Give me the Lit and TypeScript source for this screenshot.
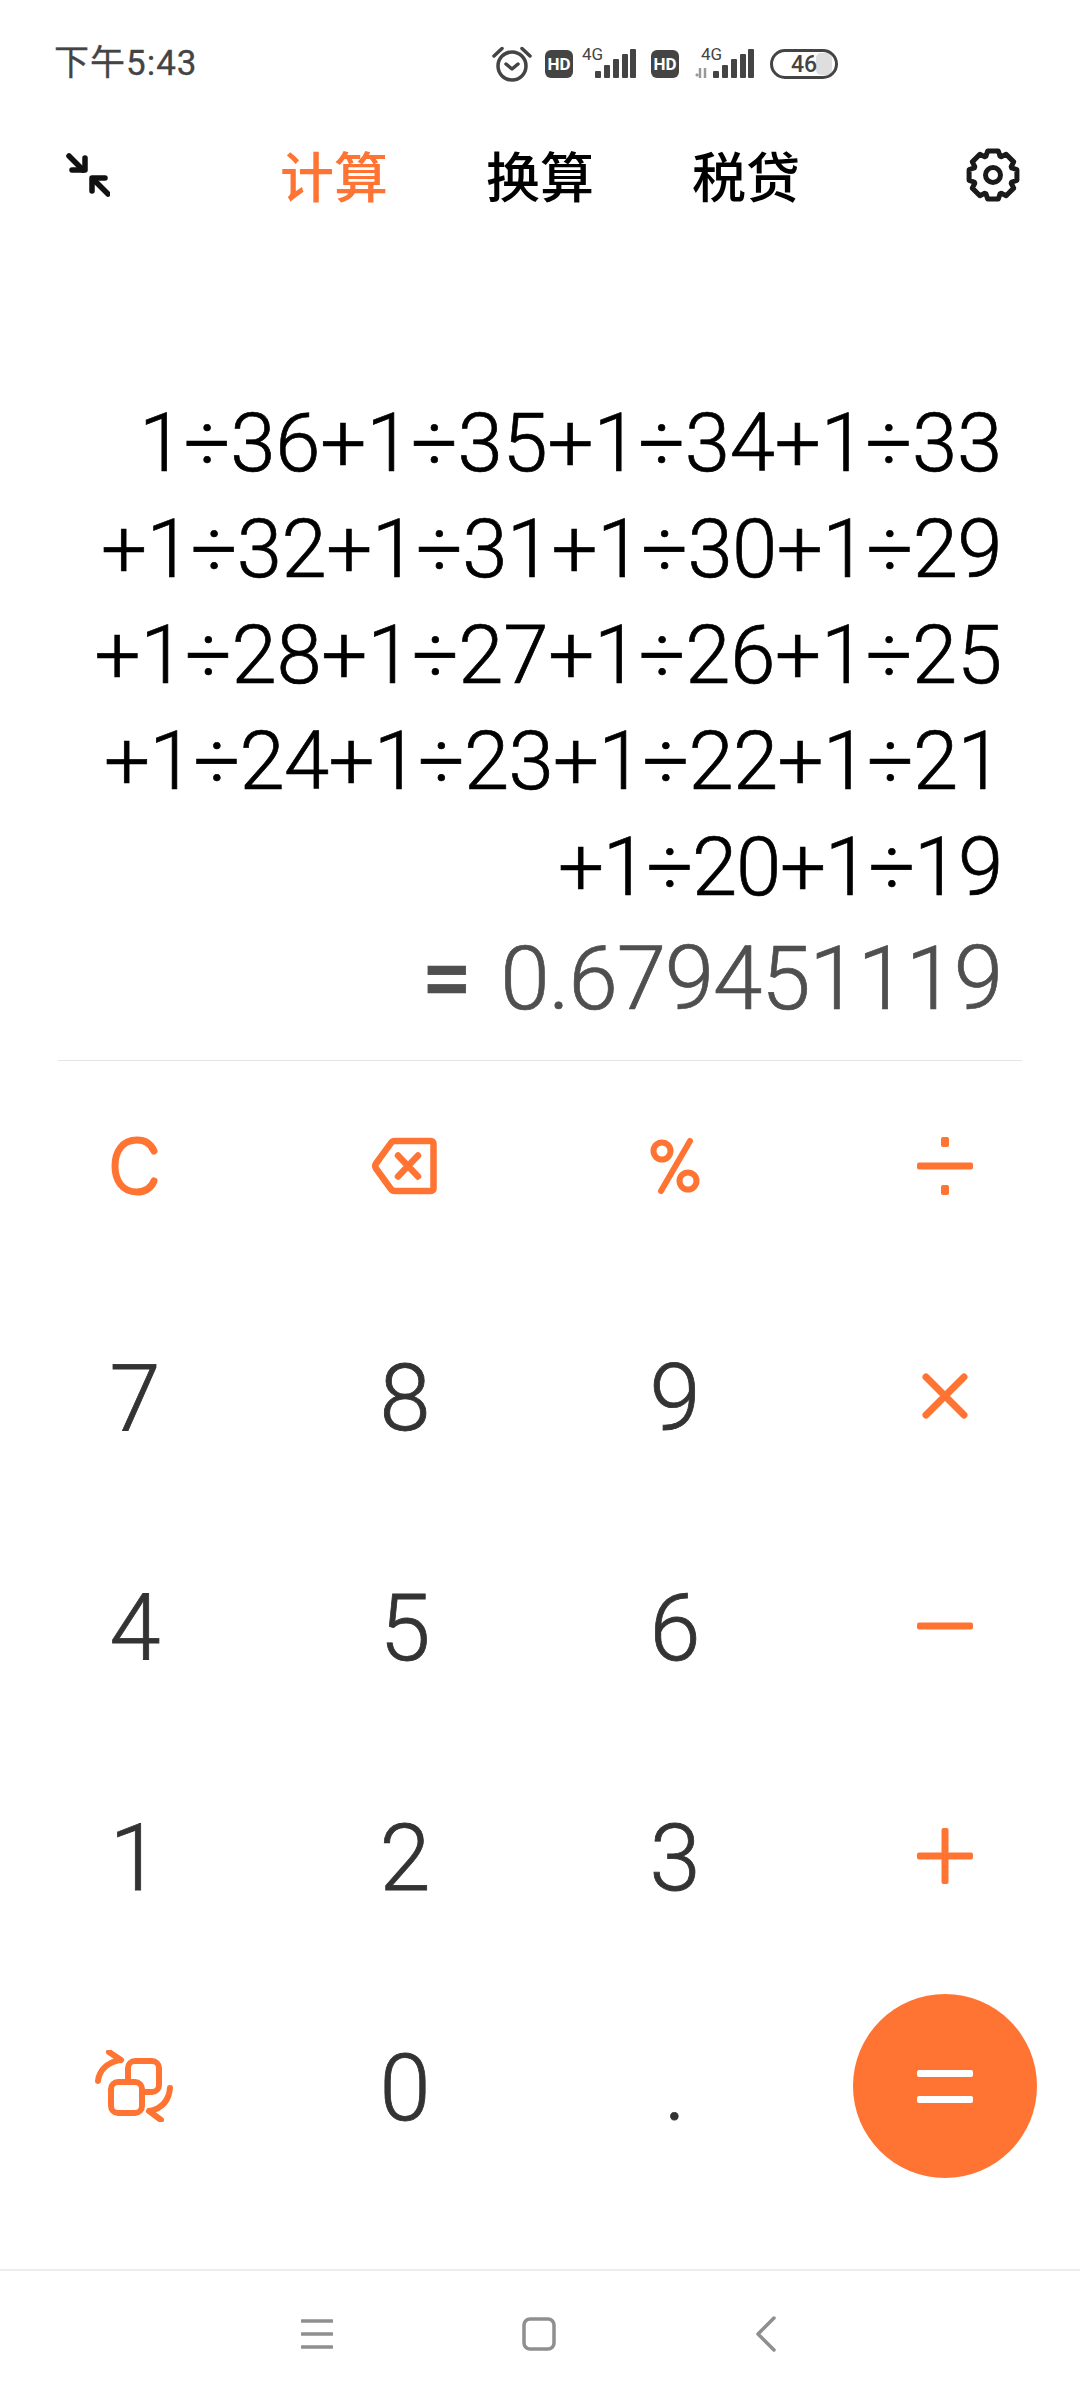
import { LitElement, html, css, svg } from "lit";
import { customElement } from "lit/decorators.js";

const EXPR: { text: string; track: number }[] = [
  { text: "1÷36+1÷35+1÷34+1÷33", track: -0.16 },
  { text: "+1÷32+1÷31+1÷30+1÷29", track: -0.55 },
  { text: "+1÷28+1÷27+1÷26+1÷25", track: -0.23 },
  { text: "+1÷24+1÷23+1÷22+1÷21", track: -0.7 },
  { text: "+1÷20+1÷19", track: -1.2 },
];

function gearPath(): string {
  const cx = 30, cy = 30, ro = 24.5, ri = 20;
  const pts: string[] = [];
  for (let i = 0; i < 8; i++) {
    const a = (i * Math.PI) / 4 - Math.PI / 2;
    const d = 0.22, e = 0.36;
    const p = (r: number, t: number) =>
      `${(cx + r * Math.cos(t)).toFixed(2)} ${(cy + r * Math.sin(t)).toFixed(2)}`;
    pts.push(p(ri, a - e), p(ro, a - d), p(ro, a + d), p(ri, a + e));
  }
  return "M" + pts.join("L") + "Z";
}

const bars = (xs: number[]) => {
  const hs = [7, 13, 19, 24, 29];
  return xs.map((x, i) => svg`<rect x=${x} y=${33 - hs[i]} width="6" height=${hs[i]} rx="1" fill="#444"/>`);
};

const ORANGE = "#ff7433";

const icons = {
  c: svg`<svg class="ico" width="60" height="60" viewBox="0 0 60 60"><path d="M49 15C46 8 40 4 32 4 17 4 10 16 10 30s7 26 22 26c8 0 14-4 17-11" fill="none" stroke=${ORANGE} stroke-width="7" stroke-linecap="round"/></svg>`,
  back: svg`<svg class="ico" width="68" height="58" viewBox="0 0 68 58"><path d="M60 4H24c-2 0-3.500.8-4.500 2.600L5 26.500c-1 1.500-1 3.500 0 5l14.500 20c1 1.800 2.500 2.500 4.500 2.500h36c1.500 0 2.500-1 2.500-2.500V6.500C62.500 5 61.500 4 60 4z" fill="none" stroke=${ORANGE} stroke-width="6.500" stroke-linejoin="round"/><path d="M27 18.500l20 21M47 18.500l-20 21" fill="none" stroke=${ORANGE} stroke-width="6.500" stroke-linecap="round"/></svg>`,
  pct: svg`<svg class="ico" width="50" height="58" viewBox="0 0 50 58"><circle cx="12" cy="14" r="8.500" fill="none" stroke=${ORANGE} stroke-width="6"/><circle cx="38" cy="44" r="8.500" fill="none" stroke=${ORANGE} stroke-width="6"/><path d="M40 4L11 54" fill="none" stroke=${ORANGE} stroke-width="6" stroke-linecap="round"/></svg>`,
  div: svg`<svg class="ico" width="56" height="58" viewBox="0 0 56 58"><rect y="25.500" width="56" height="7" rx="2" fill=${ORANGE}/><rect x="24" y="0" width="8" height="10" rx="2" fill=${ORANGE}/><rect x="24" y="48" width="8" height="10" rx="2" fill=${ORANGE}/></svg>`,
  mul: svg`<svg class="ico" width="48" height="48" viewBox="0 0 48 48"><path d="M5 5l38 38M43 5L5 43" fill="none" stroke=${ORANGE} stroke-width="7" stroke-linecap="round"/></svg>`,
  sub: svg`<svg class="ico" width="56" height="8" viewBox="0 0 56 8"><rect y="0.500" width="56" height="7" rx="2" fill=${ORANGE}/></svg>`,
  add: svg`<svg class="ico" width="56" height="56" viewBox="0 0 56 56"><rect y="24.500" width="56" height="7" rx="2" fill=${ORANGE}/><rect x="24.500" width="7" height="56" rx="2" fill=${ORANGE}/></svg>`,
  swap: svg`<svg class="ico" width="80" height="72" viewBox="0 0 80 72"><g fill="none" stroke=${ORANGE} stroke-width="6" stroke-linecap="round" stroke-linejoin="round"><rect x="33" y="11" width="31" height="31" rx="7"/><rect x="16" y="32" width="31" height="31" rx="7" fill="#fff"/><path d="M3 31C4 22 10 13 25 10M14 2l12 8"/><path d="M75 38C74 49 68 58 55 61M66 70l-12-9"/></g></svg>`,
};

@customElement("app-root")
export class AppRoot extends LitElement {
  static styles = css`
    :host {
      display: flex;
      flex-direction: column;
      width: 1080px;
      height: 2400px;
      background: #fff;
      overflow: hidden;
      font-family: Roboto, "Noto Sans CJK SC", sans-serif;
    }
    .status {
      height: 125px;
      flex: none;
      display: flex;
      align-items: flex-start;
      padding-top: 41px;
      box-sizing: border-box;
      color: #444;
    }
    .time {
      width: 491px;
      padding-left: 54px;
      box-sizing: border-box;
      font-size: 35px;
      line-height: 46px;
      letter-spacing: 1px;
      -webkit-text-stroke: 0.3px #444;
    }
    .sys {
      display: flex;
      align-items: flex-start;
      margin-top: 4px;
    }
    .sys svg { display: block; }
    .sys text { font-family: Roboto, sans-serif; fill: #444; }
    .alarm { margin: 0 13px 0 1px; }
    .sig2 { margin-right: 1px; }
    .batt { margin-top: 4px; }
    .hd {
      width: 28px;
      height: 28px;
      border-radius: 6px;
      background: #444;
      color: #fff;
      font-size: 17px;
      font-weight: 700;
      line-height: 28px;
      text-align: center;
      margin-top: 5px;
    }
    .header {
      height: 100px;
      flex: none;
      display: grid;
      grid-template-columns: 1fr auto 1fr;
      align-items: center;
    }
    .collapse { margin-left: 66px; display: block; }
    .gear { justify-self: end; margin-right: 57px; display: block; }
    .tabs {
      display: flex;
      gap: 98px;
      font-family: "Noto Sans CJK SC", sans-serif;
      font-size: 54px;
      line-height: 70px;
      font-weight: 500;
      color: #000;
    }
    .tab.on { color: #ff7433; }
    .display {
      flex: 1;
      display: flex;
      flex-direction: column;
      justify-content: flex-end;
      align-items: flex-end;
      padding: 0 78px 0 0;
      font-weight: 300;
    }
    .line {
      font-size: 81.5px;
      line-height: 106px;
      color: #000;
      white-space: nowrap;
      -webkit-text-stroke: 0.7px #000;
    }
    .result {
      font-size: 89px;
      line-height: 118px;
      letter-spacing: -1.2px;
      color: #4f4f4f;
      white-space: nowrap;
      padding-bottom: 22px;
      -webkit-text-stroke: 0.7px #4f4f4f;
    }
    .eqsign {
      font-weight: 500;
      margin-right: 9px;
    }
    .sep {
      flex: none;
      height: 1px;
      margin: 0 58px;
      background: #e4e4e4;
    }
    .keys {
      flex: none;
      margin-top: -10px;
      display: grid;
      grid-template-columns: repeat(4, 270px);
      grid-auto-rows: 230px;
      height: 1218px;
    }
    .key {
      display: flex;
      align-items: center;
      justify-content: center;
      font-size: 92px;
      font-weight: 300;
      color: #333;
    }
    .key span {
      padding-top: 5px;
      -webkit-text-stroke: 0.8px #333;
    }
    .key .ico { display: block; }
    .eq {
      width: 184px;
      height: 184px;
      border-radius: 50%;
      background: #ff7433;
      display: flex;
      flex-direction: column;
      align-items: center;
      justify-content: center;
      gap: 19px;
    }
    .eq i {
      display: block;
      width: 56px;
      height: 7px;
      border-radius: 2px;
      background: #fff;
    }
    .nav {
      flex: none;
      height: 131px;
      border-top: 2px solid #ececec;
      box-sizing: border-box;
      display: flex;
      align-items: center;
      padding: 0 0 4px 301px;
    }
    .nav svg { display: block; }
    .n-home { margin-left: 189px; }
    .n-back { margin-left: 200px; }
  `;

  render() {
    const d = (t: string) => html`<span>${t}</span>`;
    const rows: unknown[] = [
      icons.c, icons.back, icons.pct, icons.div,
      d("7"), d("8"), d("9"), icons.mul,
      d("4"), d("5"), d("6"), icons.sub,
      d("1"), d("2"), d("3"), icons.add,
      icons.swap, d("0"), d("."),
      html`<div class="eq"><i></i><i></i></div>`,
    ];
    return html`
      <div class="status">
        <div class="time">下午5:43</div>
        <div class="sys">
          <svg class="alarm" width="40" height="38" viewBox="0 0 40 38">
            <circle cx="20" cy="21" r="14" fill="none" stroke="#444" stroke-width="3.500"/>
            <path d="M14 19l6 5 6-5" fill="none" stroke="#444" stroke-width="3.500" stroke-linecap="round" stroke-linejoin="round"/>
            <path d="M2 11L10 3.500M38 11L30 3.500" fill="none" stroke="#444" stroke-width="3.500" stroke-linecap="round"/>
          </svg>
          <div class="hd">HD</div>
          <svg width="78" height="34" viewBox="0 0 78 34">
            <text x="9" y="15" font-size="17">4G</text>
            ${bars([22, 31, 40, 49, 57])}
          </svg>
          <div class="hd">HD</div>
          <svg class="sig2" width="90" height="34" viewBox="0 0 90 34">
            <text x="22" y="15" font-size="17">4G</text>
            <path d="M21 33V23M19 31l-2-2M26 23v10" stroke="#999" stroke-width="2.500" fill="none"/>
            ${bars([34, 43, 52, 61, 69])}
          </svg>
          <svg class="batt" width="68" height="30" viewBox="0 0 68 30">
            <rect x="46" y="4" width="16" height="22" rx="5" fill="#dedede"/>
            <rect x="1.500" y="1.500" width="65" height="27" rx="13.500" fill="none" stroke="#444" stroke-width="3"/>
            <text x="34" y="23" font-size="23" font-weight="500" text-anchor="middle">46</text>
          </svg>
        </div>
      </div>

      <div class="header">
        <svg class="collapse" width="44" height="44" viewBox="0 0 44 44">
          <g fill="none" stroke="#111" stroke-width="5.500" stroke-linecap="round" stroke-linejoin="round">
            <path d="M3 3l14 14"/><path d="M6 17h13V5"/>
            <path d="M42 41L28 27"/><path d="M39 25H26v13"/>
          </g>
        </svg>
        <div class="tabs">
          <div class="tab on">计算</div>
          <div class="tab">换算</div>
          <div class="tab">税贷</div>
        </div>
        <svg class="gear" width="60" height="60" viewBox="0 0 60 60">
          <path d=${gearPath()} fill="none" stroke="#1a1a1a" stroke-width="5" stroke-linejoin="round"/>
          <circle cx="30" cy="30" r="7.500" fill="none" stroke="#1a1a1a" stroke-width="5"/>
        </svg>
      </div>

      <div class="display">
        ${EXPR.map((l) => html`<div class="line" style="letter-spacing:${l.track}px">${l.text}</div>`)}
        <div class="result"><span class="eqsign">=</span> 0.679451119</div>
      </div>
      <div class="sep"></div>

      <div class="keys">
        ${rows.map((r) => html`<div class="key">${r}</div>`)}
      </div>

      <div class="nav">
        <svg width="32" height="34" viewBox="0 0 32 34">
          <path d="M1 4h30M1 17h30M1 30h30" stroke="#8f8f8f" stroke-width="3.500" stroke-linecap="round" fill="none"/>
        </svg>
        <svg class="n-home" width="34" height="34" viewBox="0 0 34 34">
          <rect x="2" y="2" width="30" height="30" rx="6" stroke="#8f8f8f" stroke-width="3.500" fill="none"/>
        </svg>
        <svg class="n-back" width="20" height="36" viewBox="0 0 20 36">
          <path d="M18 2L2 18l16 16" stroke="#8f8f8f" stroke-width="3.500" stroke-linecap="round" stroke-linejoin="round" fill="none"/>
        </svg>
      </div>
    `;
  }
}
